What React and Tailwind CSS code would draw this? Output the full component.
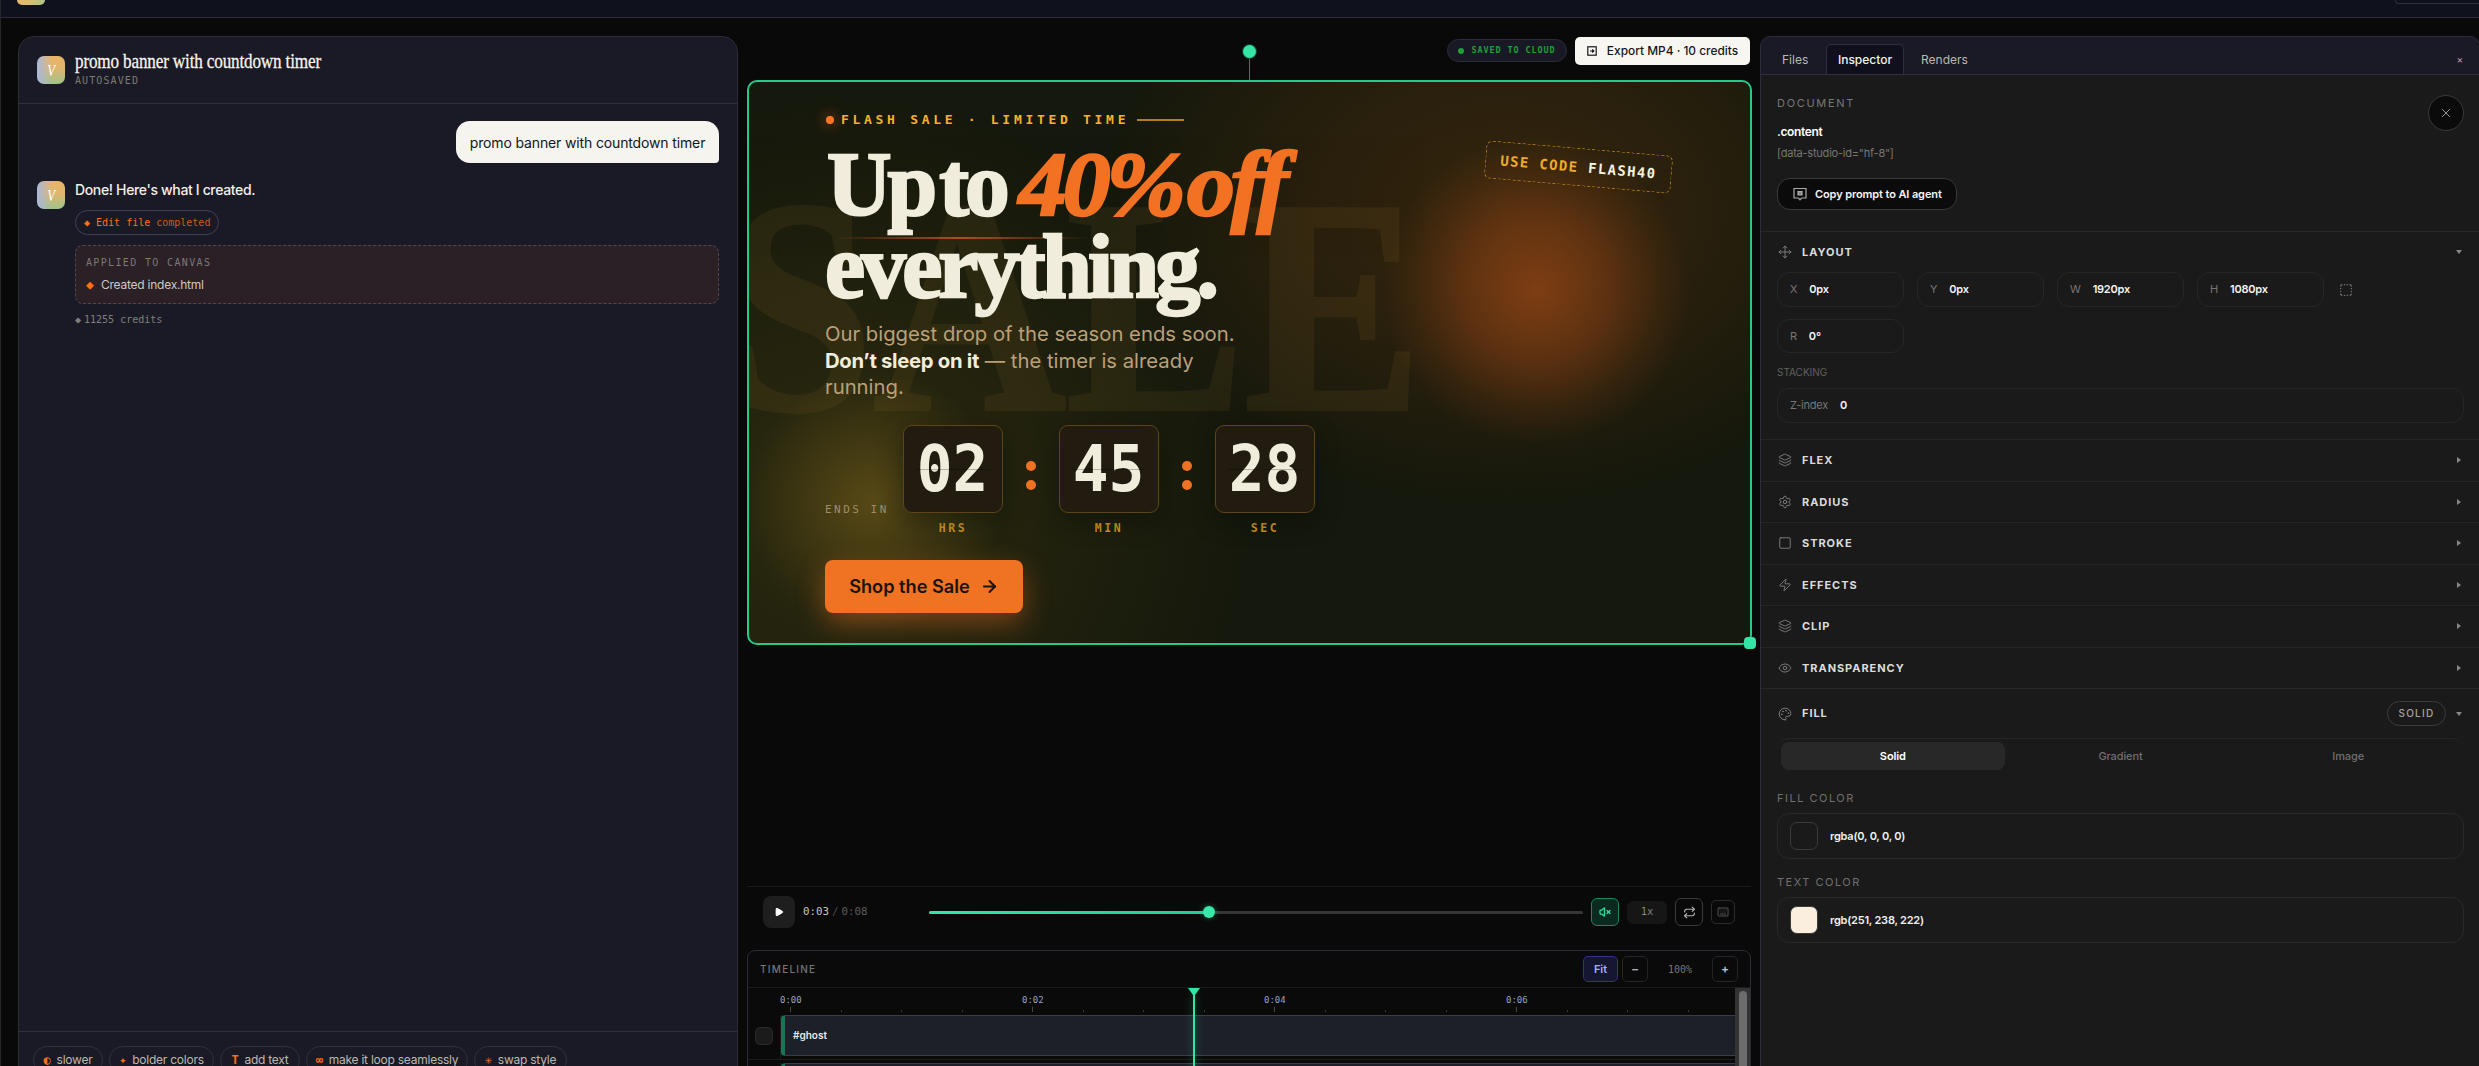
import {
  Move, Layers, Settings, Square, Zap, Eye, Palette, Play, Repeat, Keyboard,
  VolumeX, X, ArrowRight, SquareDashed,
} from "lucide-react";

const MONO = "font-['DejaVu_Sans_Mono',monospace]";
const SERIF = "font-['Liberation_Serif',serif]";

function Logo() {
  return (
    <div className={`${SERIF} flex h-7 w-7 shrink-0 items-center justify-center rounded-[7px] bg-[linear-gradient(90deg,#a9b8dc_0%,transparent_55%),linear-gradient(180deg,#eab565_0%,#e0b570_45%,#9fc488_100%)] text-[17px] italic text-white`}>
      <span className="scale-x-75 leading-none">V</span>
    </div>
  );
}

function ChatPanel() {
  const chips = [
    { icon: "◐", label: "slower", w: "w-[70px]" },
    { icon: "✦", label: "bolder colors", w: "w-[105px]" },
    { icon: "T", label: "add text", w: "w-[80px]" },
    { icon: "∞", label: "make it loop seamlessly", w: "w-[162px]" },
    { icon: "✳", label: "swap style", w: "w-[93px]" },
  ];
  return (
    <section className="mt-[18px] ml-[17px] flex h-[1060px] w-[720px] shrink-0 flex-col rounded-2xl border border-[#2c2c3b] bg-[#1a1a27]">
      <div className="flex h-[67px] items-center gap-[10px] border-b border-[#2f2f3e] pl-[18px]">
        <Logo />
        <div className="pb-1">
          <div className="h-[25px] w-[250px]">
            <h1 className={`${SERIF} origin-left scale-x-[0.78] whitespace-nowrap text-[22px] leading-[21px] tracking-[-0.01em] text-[#f6f3ec] [-webkit-text-stroke:0.3px_currentColor]`}>
              promo banner with countdown timer
            </h1>
          </div>
          <p className={`${MONO} text-[10px] leading-3 tracking-[1.1px] text-[#7d7b72]`}>AUTOSAVED</p>
        </div>
      </div>
      <div className="flex flex-1 flex-col px-[18px] pt-[17px]">
        <div className="flex h-[42px] w-[263px] items-center justify-center self-end rounded-[14px] rounded-br-[4px] bg-[#f6f4ee] text-[14px] tracking-[-0.01em] text-[#15151c]">
          promo banner with countdown timer
        </div>
        <div className="mt-[18px] flex gap-[10px]">
          <Logo />
          <div className="flex-1">
            <p className="text-[14px] leading-[18px] font-medium tracking-[-0.025em] text-[#f2efe8]">Done! Here&apos;s what I created.</p>
            <div className={`${MONO} mt-[11px] flex h-[25px] w-[144px] items-center rounded-full border border-[#3f4254] pl-2 text-[10px] text-[#ff6f0f]`}>
              <span className="mr-1.5 text-[10px]">◆</span>
              Edit file <span className="ml-1.5 text-[#c45f1f]">completed</span>
            </div>
            <div className="mt-[10px] h-[59px] rounded-lg border border-dashed border-[#55464b] bg-[#2a2026] px-[10px] pt-[11px]">
              <p className={`${MONO} text-[10px] leading-3 tracking-[1.35px] text-[#7e787a]`}>APPLIED TO CANVAS</p>
              <p className="mt-[7px] flex items-center gap-2 text-[12px] leading-[17px] tracking-[-0.02em] text-[#d0c9c2]">
                <span className={`${MONO} w-[7px] text-[13px] text-[#ff6f0f]`}>◆</span>
                Created index.html
              </p>
            </div>
            <p className={`${MONO} mt-[9px] text-[10px] leading-[14px] text-[#807f7a]`}>
              <span className="mr-[3px] text-[10px]">◆</span>11255 credits
            </p>
          </div>
        </div>
      </div>
      <div className="flex h-[64px] shrink-0 gap-1.5 border-t border-[#2f2f3e] pt-[14px] pl-[14px]">
        {chips.map((c) => (
          <div key={c.label} className={`${c.w} flex h-7 items-center justify-center gap-[6px] rounded-full border border-[#30303e] text-[12px] whitespace-nowrap tracking-[-0.02em] text-[#bdb8ae]`}>
            <span className={`${MONO} text-[12px] font-bold text-[#ff6f0f]`}>{c.icon}</span>
            {c.label}
          </div>
        ))}
      </div>
    </section>
  );
}

function TimeBox({ value, label }) {
  return (
    <div className="w-[100px]">
      <div className={`${MONO} relative flex h-[88px] items-center justify-center rounded-[9px] border border-[#5e4519] bg-[#221b0f] text-[64px] font-bold text-[#f1eddc] shadow-[0_8px_24px_rgba(0,12,8,0.4)]`}>
        <span className="scale-x-[0.93] leading-none">{value}</span>
        <div className="absolute inset-x-3 top-[43px] h-px bg-black/25" />
      </div>
      <p className={`${MONO} mt-[7px] text-center text-[11.5px] leading-4 font-bold tracking-[2.6px] text-[#d4961d]`}>{label}</p>
    </div>
  );
}

function Colon() {
  return (
    <div className="flex w-14 flex-col items-center gap-[9px] pt-[36px]">
      <div className="h-[10px] w-[10px] rounded-full bg-[#f07223]" />
      <div className="h-[10px] w-[10px] rounded-full bg-[#f07223]" />
    </div>
  );
}

function Banner() {
  return (
    <div className="relative h-[565px] w-[1005px] shrink-0">
      <div className="relative h-full overflow-hidden rounded-[10px] border-2 border-[#27c98b] bg-[#15180c]">
        <div className="absolute inset-0 bg-[radial-gradient(ellipse_400px_290px_at_755px_130px,rgba(110,60,15,0.36)_0%,rgba(90,50,15,0.28)_50%,transparent_100%),radial-gradient(circle_400px_at_100px_420px,rgba(90,78,20,0.34)_0%,transparent_100%)]" />
        <div className={`${SERIF} absolute top-[68px] left-[-24px] text-[305px] leading-[313px] font-bold text-[#e0a83c] opacity-[0.07] [-webkit-text-stroke:4px_#e0a83c]`}>
          <span className="inline-block origin-left scale-x-[0.875] whitespace-nowrap">SALE</span>
        </div>
        <div className="absolute inset-0 bg-[radial-gradient(circle_154px_at_788px_209px,rgba(220,95,25,0.46)_0%,rgba(200,85,25,0.32)_45%,rgba(180,80,20,0.12)_78%,transparent_100%),radial-gradient(circle_130px_at_125px_420px,rgba(225,170,45,0.24)_0%,transparent_100%)]" />

        <div className="relative pt-[28px] pl-[76px]">
          <div className="flex h-5 items-center pl-px">
            <div className="h-2 w-2 rounded-full bg-[#ff7526] shadow-[0_0_12px_4px_rgba(255,110,30,0.22)]" />
            <span className={`${MONO} ml-[7px] text-[13px] font-bold tracking-[3.7px] whitespace-nowrap text-[#f6b12b]`}>FLASH SALE · LIMITED TIME</span>
            <div className="ml-2 h-0.5 w-[47px] bg-[#b18019]" />
          </div>
          <h2 className={`${SERIF} relative mt-[14px] text-[92px] leading-[80px] font-bold text-[#f1eddc] [-webkit-text-stroke:2.5px_currentColor]`}>
            <div className="absolute top-[93px] left-2 h-0.5 w-[255px] bg-[linear-gradient(90deg,transparent,#b04f19_50%,transparent)]" />
            <div className="flex h-[82px]">
              <span className="relative w-[194px] pl-0.5"><span className="inline-block origin-left scale-x-[0.97] whitespace-nowrap tracking-[-4px] [word-spacing:-13px]">Up to</span></span>
              <span className="relative w-[300px] text-[#f27122]"><span className="inline-block origin-left scale-x-[1.04] whitespace-nowrap italic tracking-[-4px] [word-spacing:-14px]">40% off</span></span>
            </div>
            <div className="h-[78px]"><span className="relative inline-block origin-left scale-x-[0.98] whitespace-nowrap tracking-[-4px]">everything.</span></div>
          </h2>
          <p className="mt-[17px] w-[440px] text-[20.3px] leading-[26.7px] whitespace-nowrap text-[#bba078]">
            Our biggest drop of the season ends soon.<br />
            <b className="tracking-[-0.015em] text-[#f1eddc]">Don’t sleep on it</b> — the timer is already<br />
            running.
          </p>
          <div className="mt-[24px] flex">
            <p className={`${MONO} w-[78px] pt-[77px] text-[11px] leading-4 whitespace-nowrap tracking-[2.5px] text-[#a08d68]`}>ENDS IN</p>
            <TimeBox value="02" label="HRS" />
            <Colon />
            <TimeBox value="45" label="MIN" />
            <Colon />
            <TimeBox value="28" label="SEC" />
          </div>
          <button className="mt-6 flex h-[53px] w-[198px] items-center justify-center gap-2.5 rounded-[8px] bg-[#f07223] text-[18.2px] font-semibold text-[#1a1408] shadow-[0_10px_28px_rgba(240,114,35,0.42)]">
            Shop the Sale <ArrowRight size={19} strokeWidth={2.5} />
          </button>
        </div>

        <div className={`${MONO} absolute top-[66px] left-[736px] flex h-[38px] w-[187px] rotate-[4.8deg] items-center justify-center rounded-[6px] border border-dashed border-[#a8791c] text-[14px] font-bold tracking-[1.35px] whitespace-pre text-[#f0aa2b]`}>
          USE CODE <span className="text-[#f6f0de]">FLASH40</span>
        </div>
      </div>
      {/* selection handles */}
      <div className="absolute top-[-28px] left-[502px] h-7 w-px bg-[#178a60]" />
      <div className="absolute top-[-35px] left-[496px] h-[13px] w-[13px] rounded-full bg-[#34e5a5] ring-1 ring-[#0c4a34]" />
      <div className="absolute right-[-4px] bottom-[-4px] h-3 w-3 rounded-[4px] bg-[#34e5a5]" />
    </div>
  );
}

function Player() {
  return (
    <div className="flex h-[64px] w-[1004px] shrink-0 border-t border-[#191919] pl-4 pt-[9px]">
      <button className="flex h-8 w-8 items-center justify-center rounded-lg bg-[#1e1e1e] text-white">
        <Play size={10} fill="currentColor" />
      </button>
      <div className={`${MONO} ml-2 flex h-8 w-[126px] gap-[3px] text-[10.8px] leading-[31px]`}>
        <span className="text-[#c4c4c4]">0:03</span>
        <span className="text-[#4a4a4a]">/</span>
        <span className="text-[#5d5d5d]">0:08</span>
      </div>
      <div className="flex h-8 w-[654px] items-center">
        <div className="h-[3px] w-[280px] rounded-l bg-[linear-gradient(90deg,#33e6a6,#27c996)]" />
        <div className="-mx-1.5 z-10 h-3 w-3 rounded-full bg-[#38e8aa] shadow-[0_0_6px_rgba(52,229,165,0.4)]" />
        <div className="h-[3px] flex-1 rounded-r bg-[#363636]" />
      </div>
      <div className="ml-2 flex h-8 items-center gap-2">
        <button className="flex h-7 w-7 items-center justify-center rounded-md border border-[#138a5d] bg-[#0a2a20] text-[#30dfa0]"><VolumeX size={12} strokeWidth={2.5} /></button>
        <button className={`${MONO} h-[23px] w-10 rounded-md bg-[#161616] text-[10.5px] text-[#858585]`}>1x</button>
        <button className="flex h-7 w-7 items-center justify-center rounded-md border border-[#3a3a3a] text-[#b5b5b5]"><Repeat size={13} /></button>
        <button className="flex h-6 w-6 items-center justify-center rounded-[5px] border border-[#2b2b2b] text-[#555]"><Keyboard size={12} /></button>
      </div>
    </div>
  );
}

function Timeline() {
  const seconds = ["0:00", "0:02", "0:04", "0:06"];
  return (
    <div className="relative h-[140px] w-[1004px] shrink-0 overflow-hidden rounded-t-lg border border-[#2c2c3c] bg-[#0a0a0a]">
      <div className="flex h-[37px] items-center border-b border-[#1c1c1c] pl-3 pr-3">
        <span className="flex-1 text-[10px] font-medium tracking-[1.25px] text-[#757575]">TIMELINE</span>
        <button className="h-[26px] w-[35px] rounded-[5px] border border-[#35308c] bg-[#15162f] text-[11px] font-semibold text-[#a5aef8]">Fit</button>
        <button className="ml-1 h-[26px] w-[26px] rounded-[5px] border border-[#262626] text-[12px] leading-none font-semibold text-[#b5b5b5]">−</button>
        <span className={`${MONO} w-16 text-center text-[10px] text-[#777]`}>100%</span>
        <button className="h-[26px] w-[26px] rounded-[5px] border border-[#262626] text-[12px] leading-none font-semibold text-[#c5c5c5]">+</button>
      </div>
      <div className="flex">
        <div className="w-[987px] overflow-hidden">
          <div className="flex h-[27px] pl-[32px]">
            {seconds.map((s) => (
              <div key={s} className="relative w-[242px] shrink-0">
                <div className={`${MONO} pt-1.5 text-[9px] leading-[12px] font-medium text-[#9aa3c4]`}>{s}</div>
                <div className="absolute bottom-[3px] left-[10px] h-[5px] w-px bg-[#474747]" />
                <div className="absolute bottom-[3px] left-[61px] h-0.5 w-px bg-[#3a3a3a]" />
                <div className="absolute bottom-[3px] left-[121px] h-0.5 w-px bg-[#3a3a3a]" />
                <div className="absolute bottom-[3px] left-[182px] h-0.5 w-px bg-[#3a3a3a]" />
              </div>
            ))}
          </div>
          <div className="flex h-[45px] border-b border-[#1c1c1c]">
            <div className="flex w-[33px] justify-center border-r border-[#1c1c1c] pt-3">
              <div className="h-[18px] w-[18px] rounded-[5px] border border-[#2a2a2a] bg-[#1b1b1b]" />
            </div>
            <div className="h-[41px] flex-1 rounded-l-[4px] border-y border-l-4 border-y-[#3a3d43] border-l-[#1d7355] bg-[#1d2028] pl-2 text-[10px] leading-[39px] font-semibold text-[#e9eaee]">#ghost</div>
          </div>
          <div className="flex h-[45px] pt-[3px]">
            <div className="w-[33px] border-r border-[#1c1c1c]" />
            <div className="h-[41px] flex-1 rounded-l-[4px] border-y border-l-4 border-y-[#3a3d43] border-l-[#1d7355] bg-[#1d2028]" />
          </div>
        </div>
        <div className="h-[120px] flex-1 bg-[#333] px-[3.5px] pt-[3px]">
          <div className="h-full w-2 rounded-full bg-[#6c6c6c]" />
        </div>
      </div>
      {/* playhead */}
      <div className="absolute top-[37px] left-[440px] flex w-3 flex-col items-center">
        <svg width="12" height="8" viewBox="0 0 12 8"><path d="M0 0H12L7 7H5Z" fill="#34e5a5" /></svg>
        <div className="-mt-1 h-[110px] w-0.5 bg-[#34e5a5] shadow-[0_0_8px_rgba(52,229,165,0.5)]" />
      </div>
    </div>
  );
}

function Field({ label, value, className }) {
  return (
    <div className={`${className} flex items-center gap-3 rounded-[12px] border border-[#262626] pl-3 text-[11px] tracking-[-0.02em]`}>
      <span className="text-[#777]">{label}</span>
      <span className="font-semibold text-[#f4f4f4]">{value}</span>
    </div>
  );
}

function SectionRow({ icon: Icon, title }) {
  return (
    <div className="flex h-[41.5px] items-center border-t border-[#252525] pr-[18px] pl-[17px]">
      <Icon size={14} strokeWidth={1.5} className="text-[#858585]" />
      <span className="ml-[10px] flex-1 text-[11px] font-bold tracking-[0.95px] text-[#dcdcdc]">{title}</span>
      <span className="h-0 w-0 border-y-[3px] border-l-[4px] border-y-transparent border-l-[#888]" />
    </div>
  );
}

function ColorField({ label, swatch, value, className }) {
  return (
    <div className={className}>
      <p className="text-[11px] leading-4 tracking-[1.5px] text-[#707070]">{label}</p>
      <div className="mt-[7px] flex h-[46px] items-center rounded-[12px] border border-[#282828] pl-3">
        <div className={`${swatch} h-7 w-7 rounded-[7px] border border-[#3a3a3a]`} />
        <span className="ml-3 text-[11px] font-semibold tracking-[-0.02em] text-[#f0f0f0]">{value}</span>
      </div>
    </div>
  );
}

function Inspector() {
  return (
    <section className="mt-[18px] ml-[8px] flex h-[1060px] w-[720px] shrink-0 flex-col overflow-hidden rounded-t-[10px] border border-[#2c2c3b] bg-[#1a1a1a]">
      <div className="flex h-[38px] shrink-0 items-end border-b border-[#2f2f3e] bg-[#1a1a27] pl-[8px] text-[12px] leading-[29px]">
        <span className="w-[57px] pl-[13px] text-[#bcb8b0]">Files</span>
        <span className="h-[30px] w-[78px] rounded-t-[5px] border border-b-0 border-[#2c2d3e] bg-[#0f101c] text-center font-medium text-[#f6f3ec]">Inspector</span>
        <span className="flex-1 pl-[17px] text-[#bcb8b0]">Renders</span>
        <span className="pr-[16px] text-[10px] text-[#aaa]">×</span>
      </div>
      <div className="flex h-[156px] shrink-0 justify-between pt-[20px] pr-[15px] pl-4">
        <div>
          <p className="text-[11px] leading-4 tracking-[1.7px] text-[#777]">DOCUMENT</p>
          <p className="mt-3 text-[12px] leading-[18px] font-semibold tracking-[-0.03em] text-white">.content</p>
          <p className="mt-[3px] text-[11px] leading-[18px] tracking-[-0.02em] text-[#777]">[data-studio-id=&quot;hf-8&quot;]</p>
          <button className="mt-4 flex h-8 w-[180px] items-center rounded-[13px] border border-[#3a3a3a] bg-[#0b0b0b] pl-[15px] text-[11px] font-semibold tracking-[-0.01em] whitespace-nowrap text-[#f4f4f4]">
            <svg width="14" height="14" viewBox="0 0 14 14" fill="none" stroke="#aaa" strokeWidth="1.2" className="mr-2">
              <path d="M1 1.5H13V11H8.5L7 12.8L5.5 11H1Z" />
              <path d="M5 4.5H9V7.8H5Z" fill="#888" />
            </svg>
            Copy prompt to AI agent
          </button>
        </div>
        <button className="flex h-9 w-9 items-center justify-center rounded-full border border-[#3a3a3a] bg-[#0b0b0b] text-[#aaa]"><X size={14} strokeWidth={1.5} /></button>
      </div>

      <div className="h-[208px] shrink-0 border-t border-[#282828] pr-[15px] pl-4">
        <div className="flex h-[40px] items-center pl-px pr-[2px]">
          <Move size={14} strokeWidth={1.5} className="text-[#888]" />
          <span className="ml-[10px] flex-1 text-[11px] font-bold tracking-[0.95px] text-[#dcdcdc]">LAYOUT</span>
          <span className="h-0 w-0 border-x-[3px] border-t-[4px] border-x-transparent border-t-[#888]" />
        </div>
        <div className="flex items-center gap-[13px]">
          <Field label="X" value="0px" className="h-[35px] w-[127px]" />
          <Field label="Y" value="0px" className="h-[35px] w-[127px]" />
          <Field label="W" value="1920px" className="h-[35px] w-[127px]" />
          <Field label="H" value="1080px" className="h-[35px] w-[127px]" />
          <SquareDashed size={14} strokeWidth={1.8} className="ml-[2px] text-[#888]" />
        </div>
        <Field label="R" value="0°" className="mt-3 h-[34px] w-[127px]" />
        <p className="mt-[11px] text-[10px] leading-4 text-[#606060]">STACKING</p>
        <Field label="Z-index" value="0" className="mt-2 h-[35px]" />
      </div>
      <SectionRow icon={Layers} title="FLEX" />
      <SectionRow icon={Settings} title="RADIUS" />
      <SectionRow icon={Square} title="STROKE" />
      <SectionRow icon={Zap} title="EFFECTS" />
      <SectionRow icon={Layers} title="CLIP" />
      <SectionRow icon={Eye} title="TRANSPARENCY" />

      <div className="border-t border-[#282828] pr-[15px] pl-4">
        <div className="flex h-[49px] items-center pl-px pr-[2px]">
          <Palette size={14} strokeWidth={1.5} className="text-[#888]" />
          <span className="ml-[10px] flex-1 text-[11px] font-bold tracking-[0.95px] text-[#dcdcdc]">FILL</span>
          <span className="mr-[10px] h-[25px] w-[59px] rounded-full border border-[#3c3c3c] text-center text-[10px] leading-[23px] font-medium tracking-[1.3px] text-[#a5a5a5]">SOLID</span>
          <span className="h-0 w-0 border-x-[3px] border-t-[4px] border-x-transparent border-t-[#888]" />
        </div>
        <div className="grid grid-cols-3 gap-1 rounded-xl border-t border-[#262626] p-1 pt-[3px] text-center text-[11px] leading-7 font-medium tracking-[-0.01em] text-[#6f6f6f]">
          <span className="rounded-lg bg-[#282828] font-semibold text-white">Solid</span>
          <span>Gradient</span>
          <span>Image</span>
        </div>
        <ColorField label="FILL COLOR" swatch="bg-transparent" value="rgba(0, 0, 0, 0)" className="mt-[16px]" />
        <ColorField label="TEXT COLOR" swatch="bg-[#fbeede]" value="rgb(251, 238, 222)" className="mt-[15px]" />
      </div>
    </section>
  );
}

export default function App() {
  return (
    <div className="h-[1066px] w-[2479px] overflow-hidden border-l border-[#262626] bg-[#090909] font-['Inter',sans-serif]">
      <header className="flex h-[18px] justify-between border-b border-[#2b2c38] bg-[#0f111c] pl-4">
        <div className="h-[5px] w-7 rounded-b-[7px] bg-[linear-gradient(90deg,#e8b56c,#d8bd7b_50%,#a9c48a)]" />
        <div className="h-1 w-[84px] rounded-bl-[5px] border-b border-l border-[#2f303d]" />
      </header>
      <main className="flex">
        <ChatPanel />
        <div className="ml-[8px] flex h-[1048px] w-[1006px] shrink-0 flex-col pl-px">
          <div className="flex h-[62px] shrink-0 justify-end gap-2 pt-[19px] pr-0.5">
            <div className={`${MONO} mt-0.5 flex h-[23px] w-[120px] items-center justify-center gap-[7px] rounded-full border border-[#2c2c3b] bg-[#191926] text-[8.5px] font-bold tracking-[0.9px] whitespace-nowrap text-[#1f9f38]`}>
              <span className="h-1.5 w-1.5 rounded-full bg-[#1f9f38]" />SAVED TO CLOUD
            </div>
            <button className="flex h-7 w-[175px] items-center justify-center gap-2.5 rounded-[5px] bg-[#f8f6f0] text-[11.9px] font-medium whitespace-nowrap text-[#15151c]">
              <svg width="10" height="10" viewBox="0 0 10 10" fill="none" stroke="currentColor" strokeWidth="1.2">
                <rect x="0.8" y="0.8" width="8.4" height="8.4" />
                <path d="M3 5H6.5M5.2 3.5L6.8 5L5.2 6.5" />
              </svg>
              Export MP4 · 10 credits
            </button>
          </div>
          <Banner />
          <div className="h-[241px] shrink-0" />
          <Player />
          <Timeline />
        </div>
        <Inspector />
      </main>
    </div>
  );
}
